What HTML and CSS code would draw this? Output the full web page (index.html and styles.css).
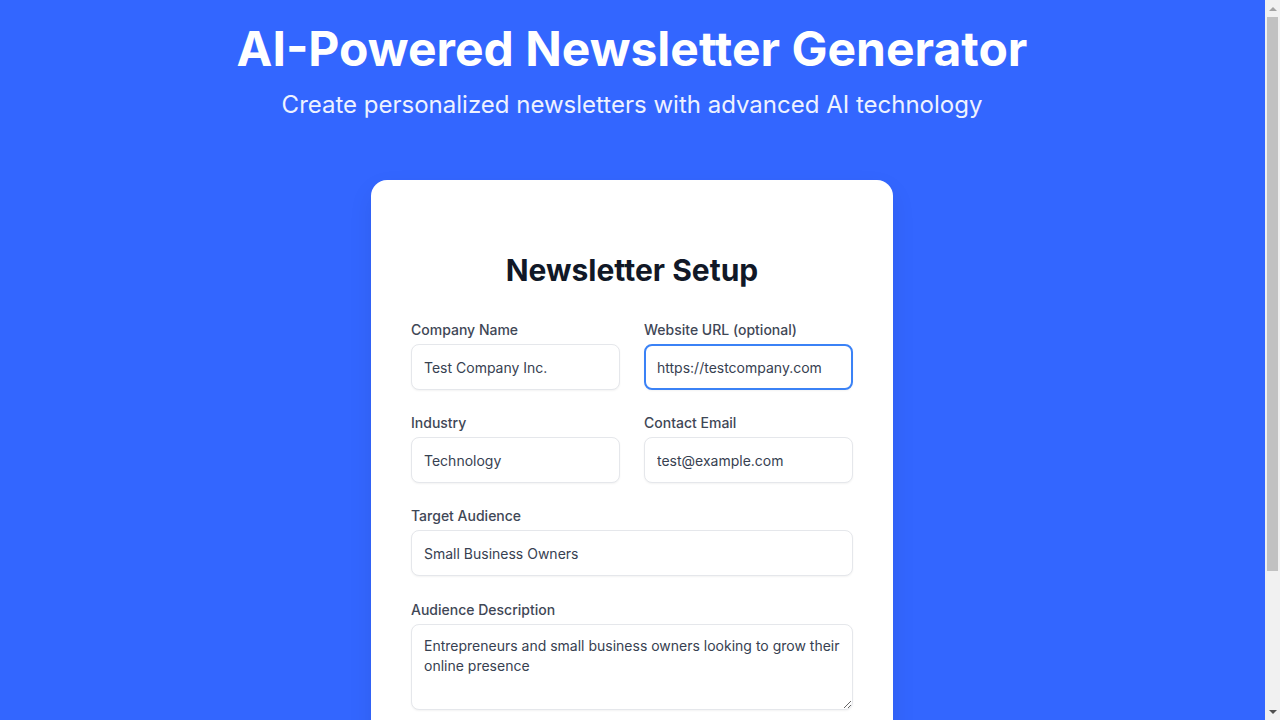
FILE: index.html
```html
<!DOCTYPE html>
<html lang="en">
<head>
<meta charset="utf-8">
<title>AI-Powered Newsletter Generator</title>
<link rel="stylesheet" href="styles.css">
</head>
<body>
<header class="hero">
  <h1 class="hero-title">AI-Powered Newsletter Generator</h1>
  <p class="hero-sub">Create personalized newsletters with advanced AI technology</p>
</header>
<main class="card">
  <h2 class="card-title">Newsletter Setup</h2>
  <form class="form">
    <div class="row">
      <label class="field">
        <span class="label">Company Name</span>
        <input class="input" type="text" value="Test Company Inc.">
      </label>
      <label class="field">
        <span class="label">Website URL (optional)</span>
        <input class="input focused" type="text" value="https://testcompany.com">
      </label>
    </div>
    <div class="row">
      <label class="field">
        <span class="label">Industry</span>
        <input class="input" type="text" value="Technology">
      </label>
      <label class="field">
        <span class="label">Contact Email</span>
        <input class="input" type="text" value="test@example.com">
      </label>
    </div>
    <label class="field">
      <span class="label">Target Audience</span>
      <input class="input" type="text" value="Small Business Owners">
    </label>
    <label class="field field-desc">
      <span class="label">Audience Description</span>
      <textarea class="input textarea" rows="3">Entrepreneurs and small business owners looking to grow their online presence</textarea>
    </label>
    <button class="submit" type="button">Continue</button>
  </form>
</main>
<div class="scrollbar" aria-hidden="true">
  <div class="sb-arrow sb-up"></div>
  <div class="sb-track"><div class="sb-thumb"></div></div>
  <div class="sb-arrow sb-down"></div>
</div>
</body>
</html>
```
FILE: styles.css
```css
* { box-sizing: border-box; }
html, body { margin: 0; padding: 0; }
body {
  background: #3366ff;
  font-family: Inter, "Noto Sans", sans-serif;
  color: #111827;
  padding: 0 16px 40px 0;
}
.hero {
  text-align: center;
  color: #ffffff;
  padding-top: 21px;
}
.hero-title {
  margin: 0;
  font-size: 48px;
  line-height: 56px;
  font-weight: 700;
}
.hero-sub {
  margin: 12px 0 0;
  font-size: 24px;
  line-height: 32px;
  font-weight: 400;
  color: #eef2ff;
}
.card {
  width: 522px;
  margin: 59px auto 0;
  background: #ffffff;
  border-radius: 16px;
  padding: 72px 40px 40px;
  box-shadow: 0 10px 25px rgba(0, 0, 0, 0.08);
}
.card-title {
  margin: 0 0 32px;
  text-align: center;
  font-size: 30px;
  line-height: 36px;
  font-weight: 700;
  color: #111827;
}
.form {
  display: flex;
  flex-direction: column;
  gap: 23px;
}
.field-desc {
  margin-top: 1px;
}
.row {
  display: grid;
  grid-template-columns: 1fr 1fr;
  gap: 24px;
}
.field {
  display: flex;
  flex-direction: column;
  gap: 4px;
}
.label {
  font-size: 14px;
  line-height: 20px;
  font-weight: 500;
  color: #3f4756;
}
.input {
  height: 46px;
  width: 100%;
  border: 1px solid #e5e7eb;
  border-radius: 8px;
  padding: 0 12px;
  font-family: Inter, "Noto Sans", sans-serif;
  font-size: 14px;
  color: #374151;
  background: #ffffff;
  box-shadow: 0 1px 2px rgba(0, 0, 0, 0.05);
  outline: none;
}
.input.focused {
  border: 2px solid #3b82f6;
  padding: 0 11px;
}
.textarea {
  height: 86px;
  padding: 11px 12px;
  line-height: 20px;
  resize: vertical;
}
.submit {
  margin-top: 8px;
  height: 48px;
  border: none;
  border-radius: 8px;
  background: #3366ff;
  color: #ffffff;
  font-family: Inter, "Noto Sans", sans-serif;
  font-size: 16px;
  font-weight: 600;
}
.scrollbar {
  position: fixed;
  top: 0;
  right: 0;
  width: 15px;
  height: 100vh;
  background: #f1f1f1;
  display: flex;
  flex-direction: column;
}
.sb-arrow {
  height: 17px;
  display: flex;
  align-items: center;
  justify-content: center;
}
.sb-up::before {
  content: "";
  border-left: 4px solid transparent;
  border-right: 4px solid transparent;
  border-bottom: 4px solid #a3a3a3;
}
.sb-down::before {
  content: "";
  border-left: 4px solid transparent;
  border-right: 4px solid transparent;
  border-top: 4px solid #505050;
}
.sb-track {
  flex: 1;
  padding: 0 2px;
}
.sb-thumb {
  height: 554px;
  background: #c1c1c1;
}
```
